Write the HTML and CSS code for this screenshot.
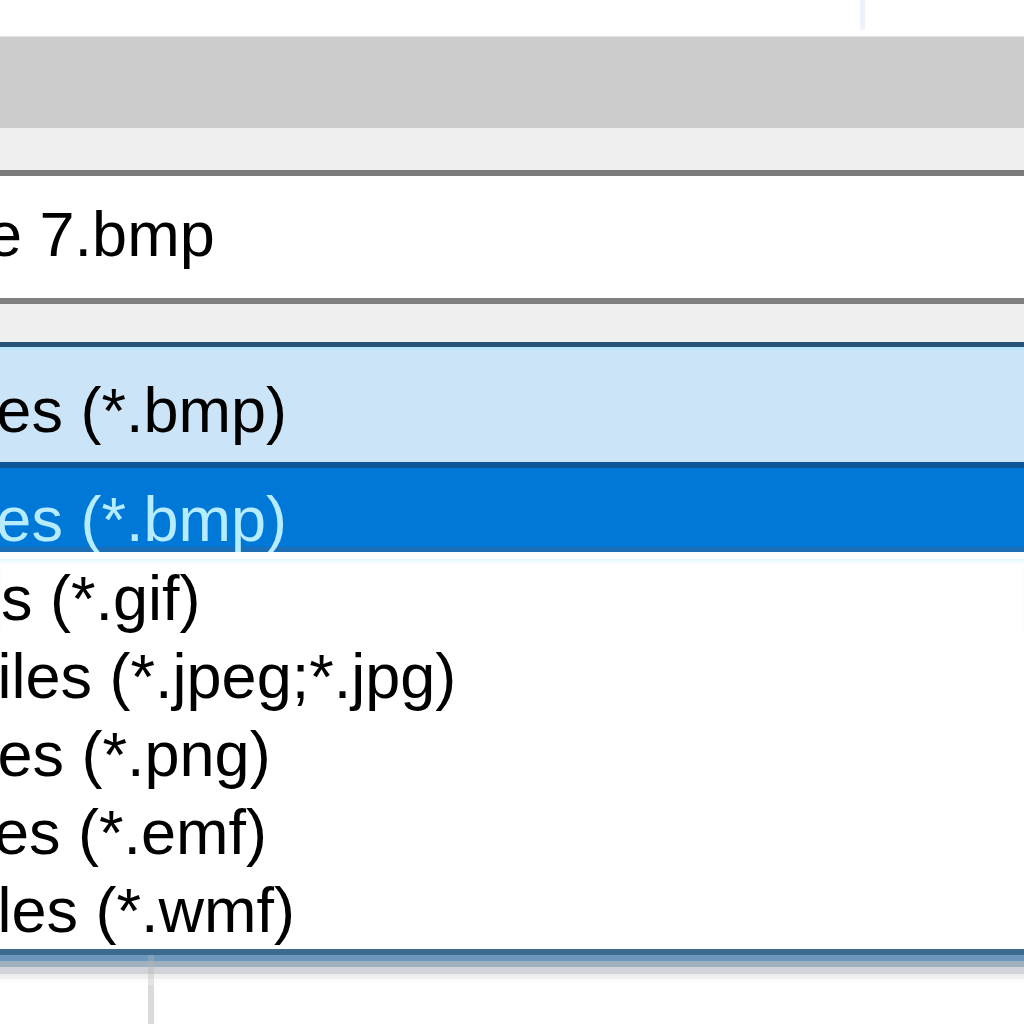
FILE: index.html
```html
<!DOCTYPE html>
<html lang="en">
<head>
<meta charset="utf-8">
<title>Save as type</title>
<link rel="stylesheet" href="styles.css">
</head>
<body>
<div class="dialog">
  <div class="top"><span class="top-sep"></span></div>
  <div class="band"></div>
  <div class="gap"></div>
  <div class="filename"><span class="fname-text">Picture 7.bmp</span></div>
  <div class="gap gap-2"></div>
  <div class="combo"><span class="item-text">BMP Files (*.bmp)</span></div>
  <ul class="list">
    <li class="row row-selected"><span class="item-text">BMP Files (*.bmp)</span></li>
    <li class="row row-first"><span class="item-text">GIF Files (*.gif)</span></li>
    <li class="row"><span class="item-text">JPEG Files (*.jpeg;*.jpg)</span></li>
    <li class="row"><span class="item-text">PNG Files (*.png)</span></li>
    <li class="row"><span class="item-text">EMF Files (*.emf)</span></li>
    <li class="row"><span class="item-text">WMF Files (*.wmf)</span></li>
  </ul>
  <div class="list-shadow"><span class="bottom-sep"></span></div>
  <div class="bottom"><span class="bottom-sep bottom-sep-2"></span></div>
</div>
</body>
</html>
```
FILE: styles.css
```css
html, body {
  margin: 0;
  padding: 0;
  background: #ffffff;
  overflow: hidden;
}

.dialog {
  width: 1024px;
  height: 1024px;
  overflow: hidden;
  font-family: "Liberation Sans", Arial, sans-serif;
  font-size: 63px;
  color: #000000;
  display: flex;
  flex-direction: column;
}

.top {
  height: 36px;
  display: flex;
  flex: none;
}

.top-sep {
  margin-left: 860px;
  width: 5px;
  height: 30px;
  background: #eef2f9;
}

.band {
  flex: none;
  height: 91px;
  border-top: 1px solid #e3e3e3;
  background: #cccccc;
}

.gap {
  flex: none;
  height: 42px;
  background: #efefef;
}

.gap-2 {
  height: 38px;
}

.filename {
  flex: none;
  box-sizing: border-box;
  height: 134px;
  border-top: 6px solid #7a7a7a;
  border-bottom: 6px solid #808080;
  background: #ffffff;
  padding-top: 19px;
  line-height: 78px;
  white-space: nowrap;
  overflow: hidden;
}

.fname-text {
  display: inline-block;
  margin-left: -174px;
}

.combo {
  flex: none;
  box-sizing: border-box;
  height: 126px;
  border-top: 5px solid #27537a;
  border-bottom: 6px solid #0c5597;
  background: #cce4f7;
  box-shadow: inset 0 3px 0 #b7e4fa;
  padding-top: 24px;
  line-height: 78px;
  white-space: nowrap;
  overflow: hidden;
}

.item-text {
  display: inline-block;
  margin-left: -223px;
}

.list {
  flex: none;
  list-style: none;
  margin: 0;
  padding: 0;
  background: #ffffff;
  border-bottom: 6px solid #3d6a8f;
}

.row {
  height: 78px;
  line-height: 78px;
  white-space: nowrap;
  overflow: hidden;
}

.row-selected {
  box-sizing: border-box;
  height: 84px;
  padding-top: 12px;
  line-height: 78px;
  background: #0078d7;
  color: #b6ecff;
  box-shadow: inset 0 -5px 0 #1d6fb5;
}

.row-first {
  margin-top: 7px;
  box-shadow: inset 0 4px 4px -2px #d8f8ff;
  height: 78px;
}

.list-shadow {
  flex: none;
  height: 30px;
  display: flex;
  background: linear-gradient(to bottom,
    #6e97bd 0px, #6e97bd 6px,
    #9fb0be 6px, #9fb0be 12px,
    #d0d4d8 12px, #d0d4d8 19px,
    #ececec 19px, #f2f2f2 24px,
    #fafafa 24px, #ffffff 30px);
}

.bottom {
  flex: 1;
  display: flex;
  background: #ffffff;
}

.bottom-sep {
  margin-left: 148px;
  width: 6px;
  background: rgba(180, 180, 180, 0.35);
}

.bottom-sep-2 {
  background: #dadada;
}
```
